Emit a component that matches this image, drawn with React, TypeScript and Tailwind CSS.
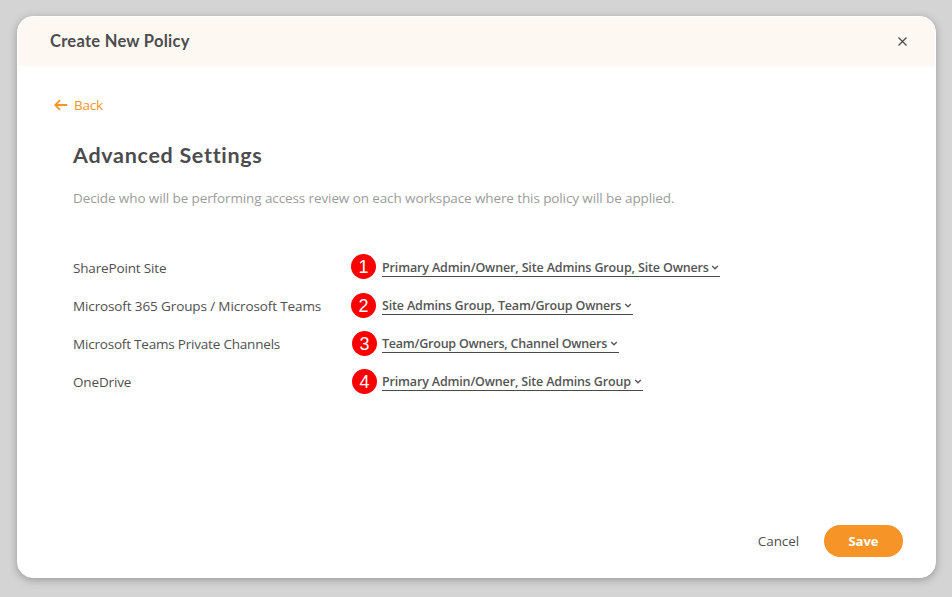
import React from "react";

type Setting = {
  label: string;
  labelClass: string;
  step: number;
  badgeClass: string;
  value: string;
  valueClass: string;
};

const settings: Setting[] = [
  { label: "SharePoint Site", labelClass: "tracking-[-0.16px]", step: 1, badgeClass: "ml-[278px] -mt-[4px]", value: "Primary Admin/Owner, Site Admins Group, Site Owners", valueClass: "w-[338px] tracking-[-0.14px]" },
  { label: "Microsoft 365 Groups / Microsoft Teams", labelClass: "tracking-[-0.12px]", step: 2, badgeClass: "ml-[278px] -mt-[2px]", value: "Site Admins Group, Team/Group Owners", valueClass: "w-[251px] tracking-[-0.16px]" },
  { label: "Microsoft Teams Private Channels", labelClass: "tracking-[-0.2px]", step: 3, badgeClass: "ml-[279px] -mt-[2px]", value: "Team/Group Owners, Channel Owners", valueClass: "w-[237px] tracking-[-0.22px]" },
  { label: "OneDrive", labelClass: "tracking-[-0.14px]", step: 4, badgeClass: "ml-[279px] -mt-[2px]", value: "Primary Admin/Owner, Site Admins Group", valueClass: "w-[261px] tracking-[-0.16px]" },
];

function Chevron() {
  return (
    <svg className="mt-px mr-px h-[7px] w-[8px] shrink-0" viewBox="0 0 8 7" fill="none" stroke="currentColor" strokeWidth="1.3">
      <path d="M1.2 2 4 4.8 6.8 2" />
    </svg>
  );
}

function SettingRow({ label, labelClass, step, badgeClass, value, valueClass }: Setting) {
  return (
    <div className="grid h-[38px] grid-cols-[309px_1fr] items-center">
      <div className="grid items-center">
        <span className={`col-start-1 row-start-1 text-[13.5px] leading-5 whitespace-nowrap text-[#505050] ${labelClass}`}>{label}</span>
        <span className={`col-start-1 row-start-1 flex size-[25px] items-center justify-center rounded-full bg-[#ff0000] pt-[2px] font-['Liberation_Sans',sans-serif] text-[18px] leading-none text-white ${badgeClass}`}>
          {step}
        </span>
      </div>
      <button className={`-mt-[1px] flex h-[19px] items-center justify-between border-b border-[#4a4a4a] text-[12.5px] leading-[18px] font-semibold whitespace-nowrap text-[#555] ${valueClass}`}>
        <span className="pt-px">{value}</span>
        <Chevron />
      </button>
    </div>
  );
}

export default function App() {
  return (
    <div className="h-[597px] w-[952px] bg-[#d4d4d4] pt-4 pl-[17px] font-['Open_Sans','Noto_Sans',sans-serif]">
      <section className="flex h-[562px] w-[919px] flex-col overflow-hidden rounded-[16px] border border-white bg-white shadow-[0_2px_8px_rgba(0,0,0,0.28)]">
        <header className="flex h-[49px] shrink-0 items-center justify-between bg-[#fef8f2] pr-[28px] pl-[32px]">
          <h1 className="font-['Lato',sans-serif] text-[16.5px] font-bold tracking-[0.27px] text-[#4c4c4e]">Create New Policy</h1>
          <svg className="size-[9px]" viewBox="0 0 9 9" fill="none" stroke="#4c4c4e" strokeWidth="1.3">
            <path d="M.5.5 8.5 8.5M8.5.5.5 8.5" />
          </svg>
        </header>
        <main className="flex grow flex-col pl-[55px]">
          <button className="mt-[29px] -ml-[19px] flex h-5 items-center gap-[6px] self-start text-[13.5px] text-[#f79428]">
            <svg className="h-[12px] w-[14px]" viewBox="0 0 14 12" fill="none" stroke="currentColor" strokeWidth="1.8">
              <path d="M13.2 6H1.5M6 1.2 1.2 6 6 10.8" />
            </svg>
            <span className="pt-px tracking-[-0.2px]">Back</span>
          </button>
          <h2 className="mt-[25px] h-[30px] font-['Lato',sans-serif] text-[21.5px] leading-[30px] font-bold tracking-[0.7px] text-[#4c4c4e]">Advanced Settings</h2>
          <p className="mt-[18px] h-5 text-[13.5px] leading-5 tracking-[-0.105px] whitespace-nowrap text-[#9c9c9c]">
            Decide who will be performing access review on each workspace where this policy will be applied.
          </p>
          <div className="mt-[41px]">
            {settings.map((s) => (
              <SettingRow key={s.step} {...s} />
            ))}
          </div>
        </main>
        <footer className="mr-[32px] mb-[20px] flex items-center justify-end gap-[25px] text-[13.5px]">
          <button className="tracking-[-0.1px] text-[#505050]">Cancel</button>
          <button className="h-8 w-[79px] rounded-full bg-[#f79428] pt-px text-[13px] font-bold text-white">Save</button>
        </footer>
      </section>
    </div>
  );
}
